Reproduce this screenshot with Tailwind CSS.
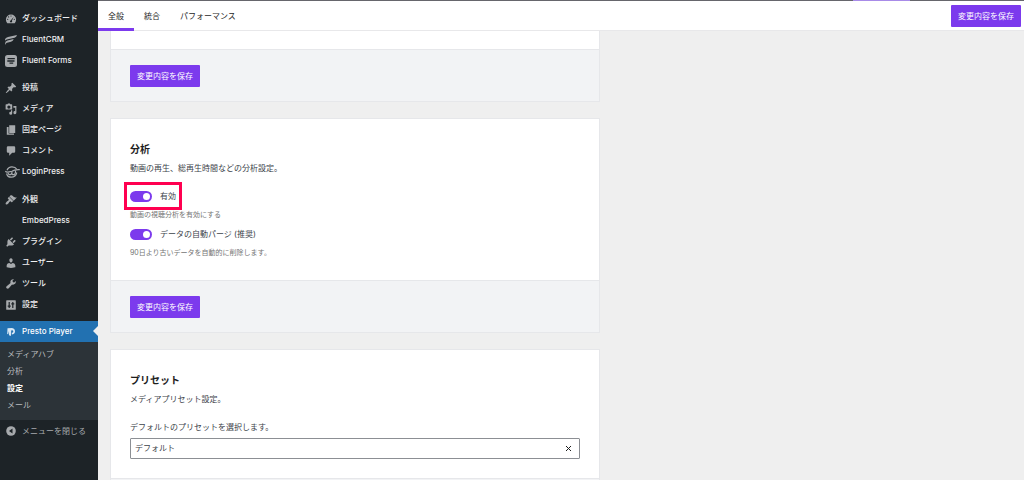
<!DOCTYPE html>
<html lang="ja">
<head>
<meta charset="utf-8">
<title>Presto Player 設定</title>
<script src="https://cdn.jsdelivr.net/npm/@tailwindcss/browser@4"></script>
</head>
<body class="flex h-screen overflow-hidden bg-[#efefef] font-['Inter','Noto_Sans_CJK_JP',sans-serif] text-[8px] text-[#3c434a]">
<aside class="w-[98px] shrink-0 bg-[#1d2327] pt-2 text-[#f0f0f1]">
  <nav>
    <ul class="text-[8px] leading-[21px] font-medium">
      <li><a href="#" class="flex h-[21px] items-center gap-[5px] pl-[5px]"><svg class="size-3 text-[#a7aaad]" viewBox="0 0 20 20" fill="currentColor"><path fill-rule="evenodd" d="M3.8 17h12.4a8.5 8.5 0 1 0-12.4 0zM10 4a1 1 0 1 1 0 2 1 1 0 0 1 0-2zM6 5.500a1 1 0 1 1 0 2 1 1 0 0 1 0-2zm8.600.600L11.500 13a1.800 1.800 0 1 1-2-.7zM4.500 9.500a1 1 0 1 1 0 2 1 1 0 0 1 0-2zm11 0a1 1 0 1 1 0 2 1 1 0 0 1 0-2z"/></svg>ダッシュボード</a></li>
      <li><a href="#" class="flex h-[21px] items-center gap-[5px] pl-[5px]"><svg class="size-3 text-[#a7aaad]" viewBox="0 0 12 12" fill="currentColor"><path d="M0 5.600Q.3 3.500 3 2.900L12 1Q11.500 3.300 9.500 3.800L1.800 5.500Q.6 5.800 0 6.800zM0 9.500Q.3 7.200 2.500 6.600L8.700 5.100Q8.200 7.200 6 7.800L2 8.800Q.6 9.200 0 11z"/></svg>FluentCRM</a></li>
      <li><a href="#" class="flex h-[21px] items-center gap-[5px] pl-[5px]"><svg class="size-3" viewBox="0 0 12 12"><rect width="12" height="12" rx="2.500" fill="#a7aaad"/><path d="M2.500 3.700h7.300M2.300 6h7.200M4.500 8.200h3.700" stroke="#1d2327" stroke-width="1.300"/></svg>Fluent Forms</a></li>
      <li class="mt-1.5"><a href="#" class="flex h-[21px] items-center gap-[5px] pl-[5px]"><svg class="size-3 text-[#a7aaad]" viewBox="0 0 20 20" fill="currentColor"><path d="M10.440 3.020l1.820-1.820 6.360 6.350-1.830 1.820c-1.050-.68-2.480-.57-3.410.36l-.75.75c-.92.930-1.040 2.350-.35 3.410l-1.830 1.820-2.410-2.410-2.800 2.790c-.42.420-3.380 2.710-3.800 2.290s1.860-3.390 2.280-3.810l2.790-2.790L4.100 9.360l1.830-1.820c1.050.69 2.480.570 3.400-.36l.75-.75c.930-.920 1.050-2.350.360-3.410z"/></svg>投稿</a></li>
      <li><a href="#" class="flex h-[21px] items-center gap-[5px] pl-[5px]"><svg class="size-3 text-[#a7aaad]" viewBox="0 0 20 20" fill="currentColor"><path fill-rule="evenodd" d="M2 2h2l1-1h3l1 1h2q1 0 1 1v7q0 1-1 1H2q-1 0-1-1V3q0-1 1-1zm4.500 2a2.700 2.700 0 1 0 0 5.400 2.700 2.700 0 0 0 0-5.400zM14 5h5v11a2.500 2.500 0 1 1-2-2.400V8h-3zM10 12h2v5a2.500 2.500 0 1 1-2-2.400z"/></svg>メディア</a></li>
      <li><a href="#" class="flex h-[21px] items-center gap-[5px] pl-[5px]"><svg class="size-3 text-[#a7aaad]" viewBox="0 0 20 20" fill="currentColor"><path d="M7 2h10v13H7zM3 5h3v11h9v2H3z"/></svg>固定ページ</a></li>
      <li><a href="#" class="flex h-[21px] items-center gap-[5px] pl-[5px]"><svg class="size-3 text-[#a7aaad]" viewBox="0 0 20 20" fill="currentColor"><path d="M5 2h10q2 0 2 2v7q0 2-2 2h-3l-5 5v-5H5q-2 0-2-2V4q0-2 2-2z"/></svg>コメント</a></li>
      <li><a href="#" class="flex h-[21px] items-center gap-0.5 pl-[5px]"><svg class="h-3 w-[15px] text-[#a7aaad]" viewBox="0 0 15 12" fill="none" stroke="currentColor" stroke-width="1.200"><path d="M2 4.200Q3.500.8 7 .9T11.800 3.300"/><path d="M.3 5.200Q1.500 6.800 4 5.800L7 5.300Q9.500 3.200 14.800 3.600"/><path d="M1.600 7.500Q2.400 11.200 6.300 11.200 10.800 11 11.800 6.500"/><path d="M3 6.500Q3.300 9 5.500 8.600 7.300 8 7 5.500M7 8Q8 9.200 9.600 8.200 10.800 7 10.500 4.500"/></svg>LoginPress</a></li>
      <li class="mt-[7px]"><a href="#" class="flex h-[21px] items-center gap-[5px] pl-[5px]"><svg class="size-3 text-[#a7aaad]" viewBox="0 0 20 20" fill="currentColor"><path d="M14.480 11.060L7.410 3.990l1.500-1.500c.5-.56 2.300-.47 3.510.32 1.210.8 1.430 1.280 2.910 2.100 1.180.640 2.450 1.260 4.450.850zm-.71.710L6.700 4.700 4.930 6.470c-.39.390-.39 1.020 0 1.410l1.060 1.060c.39.390.39 1.030 0 1.420-.6.600-1.430 1.110-2.210 1.690-.35.260-.7.530-1.010.840C1.430 14.230.4 16.080 1.400 17.070c.99 1 2.840-.03 4.180-1.360.31-.31.580-.66.850-1.020.57-.78 1.080-1.610 1.690-2.210.39-.39 1.020-.39 1.410 0l1.060 1.060c.39.390 1.020.39 1.410 0z"/></svg>外観</a></li>
      <li><a href="#" class="flex h-[21px] items-center pl-[22px]">EmbedPress</a></li>
      <li><a href="#" class="flex h-[21px] items-center gap-[5px] pl-[5px]"><svg class="size-3 text-[#a7aaad]" viewBox="0 0 20 20" fill="currentColor"><path d="M13.110 4.360L9.870 7.600 8 5.730l3.240-3.240c.35-.34 1.050-.2 1.560.320.52.510.66 1.210.310 1.550zm-8 1.770l.91-1.120 9.010 9.010-1.190.84c-.71.710-2.630 1.160-3.820 1.160H6.140L4.900 17.260c-.59.590-1.540.59-2.120 0-.59-.58-.59-1.530 0-2.120l1.240-1.240v-3.880c0-1.130.4-3.190 1.090-3.890zm7.260 3.970l3.240-3.240c.34-.35 1.040-.21 1.550.310.52.510.66 1.210.310 1.550l-3.240 3.250z"/></svg>プラグイン</a></li>
      <li><a href="#" class="flex h-[21px] items-center gap-[5px] pl-[5px]"><svg class="size-3 text-[#a7aaad]" viewBox="0 0 20 20" fill="currentColor"><path d="M10 9.250c-2.270 0-2.730-3.440-2.730-3.440C7 4.020 7.820 2 9.970 2c2.160 0 2.980 2.020 2.710 3.810 0 0-.41 3.440-2.680 3.440zm0 2.570L12.720 10c2.390 0 4.520 2.330 4.520 4.530v2.490s-3.650 1.130-7.240 1.130c-3.650 0-7.240-1.130-7.240-1.130v-2.490c0-2.250 1.940-4.480 4.470-4.480z"/></svg>ユーザー</a></li>
      <li><a href="#" class="flex h-[21px] items-center gap-[5px] pl-[5px]"><svg class="size-3 text-[#a7aaad]" viewBox="0 0 20 20" fill="currentColor"><path d="M16.680 9.770c-1.340 1.340-3.300 1.670-4.950.990l-5.410 6.520c-.99.990-2.590.99-3.580 0s-.99-2.590 0-3.570l6.520-5.420c-.68-1.650-.35-3.610.99-4.950 1.280-1.280 3.120-1.620 4.720-1.060l-2.890 2.890 2.820 2.820 2.860-2.870c.53 1.580.18 3.390-1.080 4.650z"/></svg>ツール</a></li>
      <li><a href="#" class="flex h-[21px] items-center gap-[5px] pl-[5px]"><svg class="size-3 text-[#a7aaad]" viewBox="0 0 20 20" fill="currentColor"><path fill-rule="evenodd" d="M3 2h14q1 0 1 1v14q0 1-1 1H3q-1 0-1-1V3q0-1 1-1zm3 3v6H4.500v2H6v2h2v-2h1.500v-2H8V5zm6 0v2h-1.500v2H12v6h2V9h1.500V7H14V5z"/></svg>設定</a></li>
      <li class="mt-1.5"><a href="#" class="relative flex h-[21px] items-center gap-[5px] bg-[#2271b1] pl-[5px] text-white"><svg class="size-3" viewBox="0 0 12 12"><path fill="#d8e8f5" d="M2.500 2.300L7 2Q10.300 2.800 10 5.800 9.500 8.500 6.800 8.500V6.800Q8.300 6.800 8.300 5.400 8 4 6.200 4.500L5.900 10 4 9.200V5L3.200 8.300 2.200 8z"/></svg>Presto Player<span class="absolute top-[5px] right-0 border-y-[5px] border-r-[5px] border-y-transparent border-r-[#efefef]"></span></a>
        <ul class="bg-[#2c3338] pt-1 pb-1.5 leading-[17px] font-normal text-[#b9bcbf]">
          <li><a href="#" class="block pl-[7px]">メディアハブ</a></li>
          <li><a href="#" class="block pl-[7px]">分析</a></li>
          <li><a href="#" class="block pl-[7px] font-bold text-white">設定</a></li>
          <li><a href="#" class="block pl-[7px]">メール</a></li>
        </ul>
      </li>
    </ul>
    <button type="button" class="flex h-[21px] items-center gap-[5px] pl-[5px] text-[#a7aaad]"><svg class="size-3" viewBox="0 0 12 12"><circle cx="6" cy="6" r="4.800" fill="#a7aaad"/><path d="M7.500 3.500v5L4 6z" fill="#1d2327"/></svg>メニューを閉じる</button>
  </nav>
</aside>
<div class="flex min-w-0 flex-1 flex-col">
  <div class="flex h-px shrink-0 justify-end bg-[#66666c] pr-[114px]"><span class="w-[57px] bg-[#a88be8]"></span></div>
  <header class="flex h-[30px] shrink-0 items-center justify-between border-b border-[#e8e8ea] bg-white pr-[3px] text-[#1e1e1e]">
    <nav class="flex">
      <a href="#" class="-mb-px h-[30px] border-b-[3px] border-[#7c3aed] px-2.5 leading-[30px]">全般</a>
      <a href="#" class="h-[30px] px-2.5 leading-[30px]">統合</a>
      <a href="#" class="h-[30px] px-2.5 leading-[30px]">パフォーマンス</a>
    </nav>
    <button type="button" class="h-[22px] rounded-[1px] bg-[#7c3aed] px-[7px] text-white">変更内容を保存</button>
  </header>
  <main class="min-h-0 flex-1 overflow-hidden pl-3">
    <div class="flex w-[490px] max-w-full flex-col gap-4">
      <section class="border border-t-0 border-[#e6e7ea] bg-white">
        <div class="h-[18px]"></div>
        <div class="border-t border-[#e6e7ea] bg-[#f2f3f5] px-[19px] pt-[15px] pb-[14px]"><button type="button" class="block h-[22px] rounded-[1px] bg-[#7c3aed] px-[7px] text-white">変更内容を保存</button></div>
      </section>
      <section class="border border-[#e6e7ea] bg-white">
        <div class="px-[19px] pt-[22px] pb-[19px]">
          <h2 class="text-[10px] leading-4 font-bold text-[#1e1e1e]">分析</h2>
          <p class="mt-[3px] leading-4">動画の再生、総再生時間などの分析設定。</p>
          <label class="relative mt-3 flex h-4 w-fit items-center gap-2"><input type="checkbox" checked class="h-[11px] w-[22px] appearance-none rounded-full bg-[#7c3aed]"><span class="absolute left-[13px] size-[7px] rounded-full bg-white"></span>有効<span class="pointer-events-none absolute -inset-x-[6px] -inset-y-[6px] border-[3px] border-[#ff0050]"></span></label>
          <p class="mt-[3px] text-[7px] leading-4 text-[#757575]">動画の視聴分析を有効にする</p>
          <label class="relative mt-[3px] flex h-4 w-fit items-center gap-2"><input type="checkbox" checked class="h-[11px] w-[22px] appearance-none rounded-full bg-[#7c3aed]"><span class="absolute left-[13px] size-[7px] rounded-full bg-white"></span>データの自動パージ (推奨)</label>
          <p class="mt-[3px] text-[7px] leading-4 text-[#757575]">90日より古いデータを自動的に削除します。</p>
        </div>
        <div class="border-t border-[#e6e7ea] bg-[#f2f3f5] px-[19px] pt-[15px] pb-[14px]"><button type="button" class="block h-[22px] rounded-[1px] bg-[#7c3aed] px-[7px] text-white">変更内容を保存</button></div>
      </section>
      <section class="border border-[#e6e7ea] bg-white">
        <div class="px-[19px] pt-[22px] pb-[19px]">
          <h2 class="text-[10px] leading-4 font-bold text-[#1e1e1e]">プリセット</h2>
          <p class="mt-[3px] leading-4">メディアプリセット設定。</p>
          <label for="preset" class="mt-3 block leading-4">デフォルトのプリセットを選択します。</label>
          <div class="relative mt-[3px]">
            <select id="preset" class="block h-[21px] w-full appearance-none rounded-[1px] border border-[#8c8f94] bg-white px-1 pb-px"><option>デフォルト</option></select>
            <button type="button" aria-label="クリア" class="absolute top-[7px] right-2"><svg class="size-[7px]" viewBox="0 0 7 7"><path d="M1 1l5 5M6 1l-5 5" stroke="#1e1e1e"/></svg></button>
          </div>
        </div>
        <div class="h-[52px] border-t border-[#e6e7ea] bg-[#f2f3f5]"></div>
      </section>
    </div>
  </main>
</div>
</body>
</html>
